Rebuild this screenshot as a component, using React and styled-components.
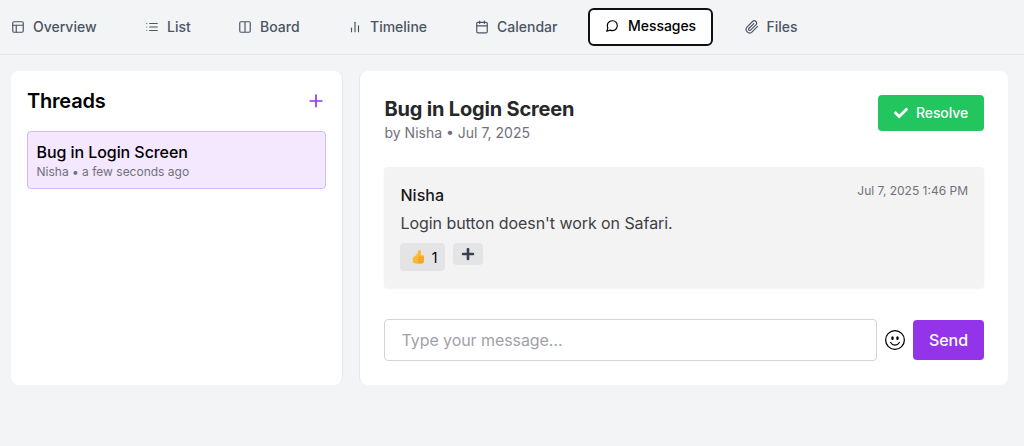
import React from "react";
import styled, { createGlobalStyle } from "styled-components";
import { FiLayout, FiList, FiColumns, FiBarChart2, FiCalendar, FiMessageCircle, FiPaperclip, FiPlus } from "react-icons/fi";
import { FaCheck, FaPlus } from "react-icons/fa";
import { BsEmojiSmile } from "react-icons/bs";

const GlobalStyle = createGlobalStyle`
  *, *::before, *::after { box-sizing: border-box; }
  body { margin: 0; background: #f3f4f6; font-family: Inter, "Liberation Sans", sans-serif; color: #000; }
  h2, h3, p { margin: 0; }
  button, input { font: inherit; }
  svg { display: block; flex: none; }
`;

const Page = styled.div`
  min-height: 446px;
  overflow: hidden;
`;

const TabBar = styled.nav`
  display: flex;
  align-items: flex-start;
  gap: 16px;
  height: 55px;
  padding-top: 8px;
  margin-left: -5px;
  border-bottom: 1px solid #e5e7eb;
`;

const Tab = styled.button`
  display: flex;
  align-items: center;
  gap: ${(p) => (p.$active ? 9 : 8)}px;
  flex: none;
  width: ${(p) => p.$width}px;
  height: 38px;
  padding: ${(p) => (p.$active ? "0 14px 2px 15px" : "0 15px 0 16px")};
  border: ${(p) => (p.$active ? "2px solid #0f0f14" : "0")};
  border-radius: 6px;
  background: ${(p) => (p.$active ? "#fff" : "transparent")};
  color: ${(p) => (p.$active ? "#000" : "#4b5563")};
  font-size: 14px;
  line-height: 20px;
  font-weight: 500;
  letter-spacing: ${(p) => (p.$active ? "-0.05px" : "0")};
  white-space: nowrap;
`;

const Content = styled.main`
  display: grid;
  grid-template-columns: 332px 649px;
  gap: 16px;
  padding: 16px 16px 0 11px;
`;

const Panel = styled.section`
  height: 314px;
  background: #fff;
  border-radius: 8px;
`;

const ThreadsPanel = styled(Panel)`
  padding: 16px;
  border-right: 1px solid #e5e7eb;
`;

const DetailPanel = styled(Panel)`
  padding: 24px;
  border-left: 1px solid #e5e7eb;
`;

const ThreadsHeader = styled.header`
  display: flex;
  align-items: center;
  justify-content: space-between;
  height: 28px;
  margin-bottom: 16px;
`;

const ThreadsTitle = styled.h2`
  font-size: 20px;
  line-height: 28px;
  font-weight: 600;
  letter-spacing: -0.2px;
`;

const IconButton = styled.button`
  display: flex;
  padding: 0;
  border: 0;
  background: none;
  color: ${(p) => p.$color};
`;

const ThreadCard = styled.article`
  height: 58px;
  padding: 8px 8px 8px 8.5px;
  border: 1px solid #d8b4fe;
  border-radius: 4px;
  background: #f3e8ff;
`;

const ThreadName = styled.h3`
  font-size: 16px;
  line-height: 24px;
  font-weight: 500;
  letter-spacing: -0.07px;
`;

const Meta = styled.p`
  font-size: ${(p) => p.$size}px;
  line-height: ${(p) => p.$line}px;
  color: #71717a;
`;

const DetailHeader = styled.header`
  display: flex;
  align-items: flex-start;
  justify-content: space-between;
  height: 72px;
  padding-left: 0.5px;
`;

const DetailTitle = styled.h2`
  color: #27272a;
  font-size: 20px;
  line-height: 28px;
  font-weight: 700;
  letter-spacing: -0.19px;
`;

const ResolveButton = styled.button`
  display: flex;
  align-items: center;
  gap: 8px;
  height: 36px;
  width: 106px;
  padding: 0 0 1px 16px;
  white-space: nowrap;
  border: 0;
  border-radius: 4px;
  background: #22c55e;
  color: #fff;
  font-size: 14px;
  font-weight: 500;
  letter-spacing: -0.1px;
`;

const Message = styled.article`
  height: 121px;
  padding: 16px;
  border-radius: 4px;
  background: #f3f3f3;
  box-shadow: 0 1px 2px rgba(0, 0, 0, 0.05);
`;

const MessageHeader = styled.header`
  display: flex;
  align-items: flex-start;
  justify-content: space-between;
  padding-left: 0.5px;
`;

const Author = styled.h3`
  color: #18181b;
  font-size: 16px;
  line-height: 24px;
  font-weight: 500;
`;

const MessageText = styled.p`
  margin-top: 4px;
  padding-left: 0.5px;
  color: #3f3f46;
  font-size: 16px;
  line-height: 24px;
  letter-spacing: -0.06px;
`;

const Reactions = styled.div`
  display: flex;
  align-items: flex-start;
  gap: 8px;
  margin-top: 8px;
`;

const Reaction = styled.button`
  display: flex;
  align-items: center;
  justify-content: center;
  gap: 7px;
  width: ${(p) => p.$width}px;
  height: ${(p) => p.$height}px;
  padding: ${(p) => (p.$counted ? "0 0 0 4px" : "0")};
  border: 0;
  border-radius: 4px;
  background: #e4e4e7;
  color: ${(p) => p.$color};
  font-size: 14px;
`;

const Composer = styled.form`
  display: flex;
  align-items: center;
  gap: 8px;
  margin-top: 31px;
`;

const MessageInput = styled.input`
  flex: 1;
  min-width: 0;
  height: 42px;
  padding: 0 16px 0 16.5px;
  border: 1px solid #d1d5db;
  border-radius: 4px;
  background: #fff;
  font-size: 16px;
  letter-spacing: -0.07px;
  &::placeholder { color: #a1a1aa; opacity: 1; }
`;

const SendButton = styled.button`
  width: 71px;
  height: 40px;
  padding: 0;
  border: 0;
  border-radius: 4px;
  background: #9333ea;
  color: #fff;
  font-size: 16px;
  font-weight: 500;
`;

const ThumbsUp = () => (
  <svg width="13" height="16" viewBox="0 0 13 16" aria-label="Thumbs up">
    <defs>
      <linearGradient id="thumb" x1="0" y1="0" x2="1" y2="1">
        <stop offset="0" stopColor="#ffc83d" />
        <stop offset="1" stopColor="#f7a928" />
      </linearGradient>
    </defs>
    <path d="M.8 8.4C2.7 7.7 4.4 6 5.4 4.1C6 2.8 6.2.8 7.6.8C9.4.9 9.4 3.4 8.9 6.2H10.6C12.3 6.2 12.3 7.7 11.8 8.4C12.4 9 12.3 10 11.8 10.5C12.3 11.2 12.1 12.2 11.6 12.6C11.8 13.9 11 14.7 9.8 14.7H5.5C3.8 14.7 2.3 13.9.8 13.7Z" fill="url(#thumb)" />
    <path d="M7.2 8.4H11.8M7.2 10.5H11.8M7.2 12.6H11.6M7.2 7V13.7" fill="none" stroke="#e58a20" strokeWidth=".5" />
  </svg>
);

const tabs = [
  { label: "Overview", Icon: FiLayout, width: 118 },
  { label: "List", Icon: FiList, width: 77 },
  { label: "Board", Icon: FiColumns, width: 94 },
  { label: "Timeline", Icon: FiBarChart2, width: 111 },
  { label: "Calendar", Icon: FiCalendar, width: 113 },
  { label: "Messages", Icon: FiMessageCircle, width: 124.5, active: true },
  { label: "Files", Icon: FiPaperclip, width: 86 },
];

export default function App() {
  return (
    <Page>
      <GlobalStyle />
      <TabBar>
        {tabs.map(({ label, Icon, width, active }) => (
          <Tab key={label} $width={width} $active={active}>
            <Icon size={14} />
            {label}
          </Tab>
        ))}
      </TabBar>
      <Content>
        <ThreadsPanel>
          <ThreadsHeader>
            <ThreadsTitle>Threads</ThreadsTitle>
            <IconButton $color="#9333ea" aria-label="New thread"><FiPlus size={20} /></IconButton>
          </ThreadsHeader>
          <ThreadCard>
            <ThreadName>Bug in Login Screen</ThreadName>
            <Meta $size={12} $line={16}>Nisha • a few seconds ago</Meta>
          </ThreadCard>
        </ThreadsPanel>
        <DetailPanel>
          <DetailHeader>
            <div>
              <DetailTitle>Bug in Login Screen</DetailTitle>
              <Meta $size={14} $line={20}>by Nisha • Jul 7, 2025</Meta>
            </div>
            <ResolveButton><FaCheck size={14} />Resolve</ResolveButton>
          </DetailHeader>
          <Message>
            <MessageHeader>
              <Author>Nisha</Author>
              <Meta $size={12} $line={16}>Jul 7, 2025 1:46 PM</Meta>
            </MessageHeader>
            <MessageText>Login button doesn't work on Safari.</MessageText>
            <Reactions>
              <Reaction $counted $width={45} $height={28} $color="#000"><ThumbsUp />1</Reaction>
              <Reaction $width={30} $height={22} $color="#374151" aria-label="Add reaction"><FaPlus size={14} /></Reaction>
            </Reactions>
          </Message>
          <Composer>
            <MessageInput placeholder="Type your message..." />
            <IconButton type="button" $color="#000" aria-label="Emoji"><BsEmojiSmile size={20} /></IconButton>
            <SendButton type="button">Send</SendButton>
          </Composer>
        </DetailPanel>
      </Content>
    </Page>
  );
}
